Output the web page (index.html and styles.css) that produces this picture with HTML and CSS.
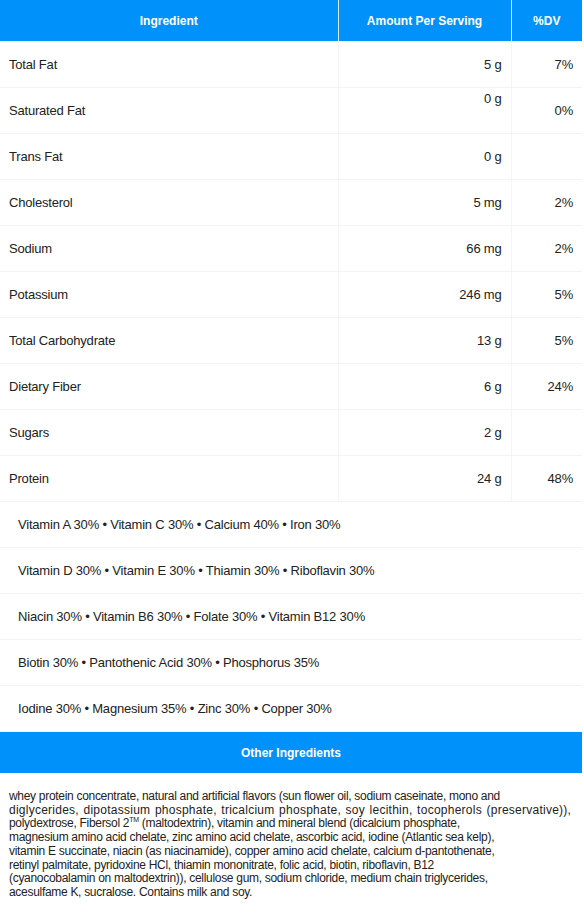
FILE: index.html
```html
<!DOCTYPE html>
<html>
<head>
<meta charset="utf-8">
<link rel="stylesheet" href="styles.css">
</head>
<body>
<table class="facts">
  <colgroup><col class="c1"><col class="c2"><col class="c3"></colgroup>
  <thead>
    <tr><th>Ingredient</th><th>Amount Per Serving</th><th>%DV</th></tr>
  </thead>
  <tbody>
    <tr><td class="name">Total Fat</td><td class="amt">5 g</td><td class="dv">7%</td></tr>
    <tr><td class="name">Saturated Fat</td><td class="amt"><span class="raised">0 g</span></td><td class="dv">0%</td></tr>
    <tr><td class="name">Trans Fat</td><td class="amt">0 g</td><td class="dv"></td></tr>
    <tr><td class="name">Cholesterol</td><td class="amt">5 mg</td><td class="dv">2%</td></tr>
    <tr><td class="name">Sodium</td><td class="amt">66 mg</td><td class="dv">2%</td></tr>
    <tr><td class="name">Potassium</td><td class="amt">246 mg</td><td class="dv">5%</td></tr>
    <tr><td class="name">Total Carbohydrate</td><td class="amt">13 g</td><td class="dv">5%</td></tr>
    <tr><td class="name">Dietary Fiber</td><td class="amt">6 g</td><td class="dv">24%</td></tr>
    <tr><td class="name">Sugars</td><td class="amt">2 g</td><td class="dv"></td></tr>
    <tr><td class="name">Protein</td><td class="amt">24 g</td><td class="dv">48%</td></tr>
    <tr><td class="vit" colspan="3">Vitamin A 30% • Vitamin C 30% • Calcium 40% • Iron 30%</td></tr>
    <tr><td class="vit" colspan="3">Vitamin D 30% • Vitamin E 30% • Thiamin 30% • Riboflavin 30%</td></tr>
    <tr><td class="vit" colspan="3">Niacin 30% • Vitamin B6 30% • Folate 30% • Vitamin B12 30%</td></tr>
    <tr><td class="vit" colspan="3">Biotin 30% • Pantothenic Acid 30% • Phosphorus 35%</td></tr>
    <tr><td class="vit" colspan="3">Iodine 30% • Magnesium 35% • Zinc 30% • Copper 30%</td></tr>
  </tbody>
  <tbody>
    <tr><th class="other" colspan="3">Other Ingredients</th></tr>
    <tr><td class="desc" colspan="3">whey protein concentrate, natural and artificial flavors (sun flower oil, sodium caseinate, mono and<br><span class="wide">diglycerides, dipotassium phosphate, tricalcium phosphate, soy lecithin, tocopherols (preservative)),</span><br>polydextrose, Fibersol 2<sup>TM</sup> (maltodextrin), vitamin and mineral blend (dicalcium phosphate,<br>magnesium amino acid chelate, zinc amino acid chelate, ascorbic acid, iodine (Atlantic sea kelp),<br>vitamin E succinate, niacin (as niacinamide), copper amino acid chelate, calcium d-pantothenate,<br>retinyl palmitate, pyridoxine HCl, thiamin mononitrate, folic acid, biotin, riboflavin, B12<br>(cyanocobalamin on maltodextrin)), cellulose gum, sodium chloride, medium chain triglycerides,<br>acesulfame K, sucralose. Contains milk and soy.</td></tr>
  </tbody>
</table>
</body>
</html>
```
FILE: styles.css
```css
html, body {
  margin: 0;
  padding: 0;
  background: #ffffff;
}
body {
  font-family: "Liberation Sans", Arial, sans-serif;
  font-size: 13px;
  letter-spacing: -0.2px;
  color: #222222;
}
.facts {
  width: 582px;
  border-collapse: collapse;
  table-layout: fixed;
}
.c1 { width: 338px; }
.c2 { width: 173px; }
.c3 { width: 71px; }
.facts th {
  background: #0092fa;
  color: #ffffff;
  font-weight: bold;
  font-size: 12px;
  letter-spacing: 0;
  height: 41px;
  padding: 0;
  text-align: center;
  vertical-align: middle;
  border-left: 1px solid #d8ecff;
  border-bottom: 1px solid #e6f3ff;
}
.facts th:first-child { border-left: none; }
.facts td {
  height: 45px;
  padding: 0 9px;
  vertical-align: middle;
  border-bottom: 1px solid #f3f3f3;
  border-left: 1px solid #f5f5f5;
}
.facts td:first-child { border-left: none; }
.amt, .dv { text-align: right; }
.amt { padding-right: 10px; }
.dv { padding-right: 11px; }
.raised {
  position: relative;
  top: -12px;
}
.vit {
  padding-left: 18px !important;
}
.facts th.other {
  height: 41px;
  border-left: none;
  border-bottom: none;
}
.facts td.desc {
  height: auto;
  padding: 17px 4px 30px 9px;
  font-size: 12px;
  letter-spacing: -0.3px;
  line-height: 13.7px;
  white-space: nowrap;
  border-bottom: none;
  color: #222222;
}
.wide {
  letter-spacing: 0.25px;
  word-spacing: 1px;
}
sup {
  font-size: 7px;
  line-height: 0;
  vertical-align: 5px;
}
```
